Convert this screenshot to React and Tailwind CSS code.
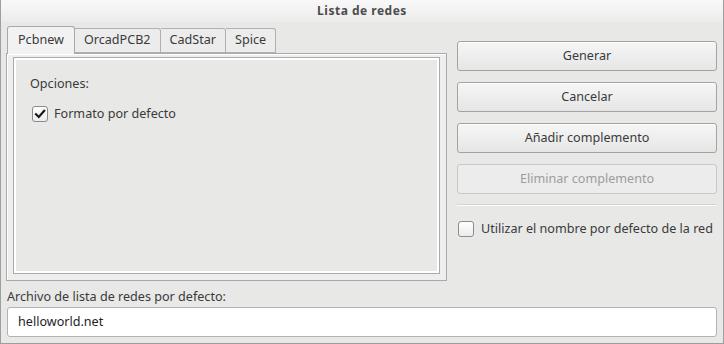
const font = { fontFamily: '"Noto Sans", "DejaVu Sans", sans-serif' };

const Check = ({ checked }) => (
  <div className="w-[16px] h-[16px] rounded-[3px] border border-[#8c8c8c] bg-gradient-to-b from-white to-[#ececec] flex items-center justify-center shrink-0">
    {checked && (
      <svg width="12" height="12" viewBox="0 0 12 12">
        <path d="M2 6.2 L4.8 9 L10.2 2.8" stroke="#1a1a1a" strokeWidth="2.2" fill="none" strokeLinecap="square" />
      </svg>
    )}
  </div>
);

const Button = ({ children, disabled }) => (
  <div
    className={
      disabled
        ? "h-[30px] rounded-[3px] border border-[#c8c8c8] bg-[#ececec] flex items-center justify-center text-[#9c9c9c]"
        : "h-[30px] rounded-[3px] border border-[#a3a3a3] bg-gradient-to-b from-[#f6f6f6] to-[#e6e6e6] shadow-[inset_0_1px_0_#ffffff] flex items-center justify-center text-[#3a3a3a]"
    }
  >
    {children}
  </div>
);

const tabs = ["Pcbnew", "OrcadPCB2", "CadStar", "Spice"];

export default function App() {
  return (
    <div style={font} className="w-[724px] h-[344px] bg-[#e8e8e7] border-x border-b border-[#9e9e9e] flex flex-col text-[12.6px] text-[#3a3a3a] overflow-hidden">
      <div className="h-[22px] shrink-0 bg-gradient-to-b from-[#f8f8f8] to-[#ececec] flex items-center justify-center">
        <span className="text-[12px] font-bold text-[#4c4c4c] tracking-[0.5px]">Lista de redes</span>
      </div>
      <div className="flex pl-[5px] gap-[10px]">
        <div className="w-[441px] shrink-0 pt-[4px]">
          <div className="flex items-end h-[27px] pl-[1px]">
            {tabs.map((t, i) => (
              <div
                key={t}
                className={
                  i === 0
                    ? "h-[28px] px-[10px] flex items-center bg-[#f2f2f2] border border-b-0 border-[#a8a8a8] rounded-t-[3px] -mb-[1px] relative z-10"
                    : "h-[25px] px-[9px] flex items-center bg-[#ececec] border border-l-0 border-[#b0b0b0] rounded-tr-[3px]"
                }
              >
                {t}
              </div>
            ))}
          </div>
          <div className="h-[228px] border border-[#a8a8a8] bg-[#eeeeee] shadow-[inset_1px_1px_0_#ffffff] p-[6px] pt-[3px]">
            <div className="h-full border border-[#ababab] shadow-[inset_0_0_0_2px_#ffffff] bg-[#e8e8e7] px-[16px] pt-[17px]">
              <div>Opciones:</div>
              <div className="flex items-center gap-[6px] mt-[11px] ml-[2px]">
                <Check checked />
                <span>Formato por defecto</span>
              </div>
            </div>
          </div>
        </div>
        <div className="w-[260px] shrink-0 pt-[19px] flex flex-col gap-[11px]">
          <Button>Generar</Button>
          <Button>Cancelar</Button>
          <Button>Añadir complemento</Button>
          <Button disabled>Eliminar complemento</Button>
          <div className="border-t border-[#d2d2d2] border-b border-b-white mt-[-1px]" />
          <div className="flex items-center gap-[7px] mt-[3px] ml-[1px] whitespace-nowrap">
            <Check />
            <span>Utilizar el nombre por defecto de la red</span>
          </div>
        </div>
      </div>
      <div className="px-[6px] mt-[8px]">
        <div className="leading-[16px]">Archivo de lista de redes por defecto:</div>
        <div className="mt-[2px] h-[30px] w-[710px] rounded-[3px] border border-[#b3b3b3] bg-white flex items-center px-[10px] text-[#1e1e1e]">
          helloworld.net
        </div>
      </div>
    </div>
  );
}
